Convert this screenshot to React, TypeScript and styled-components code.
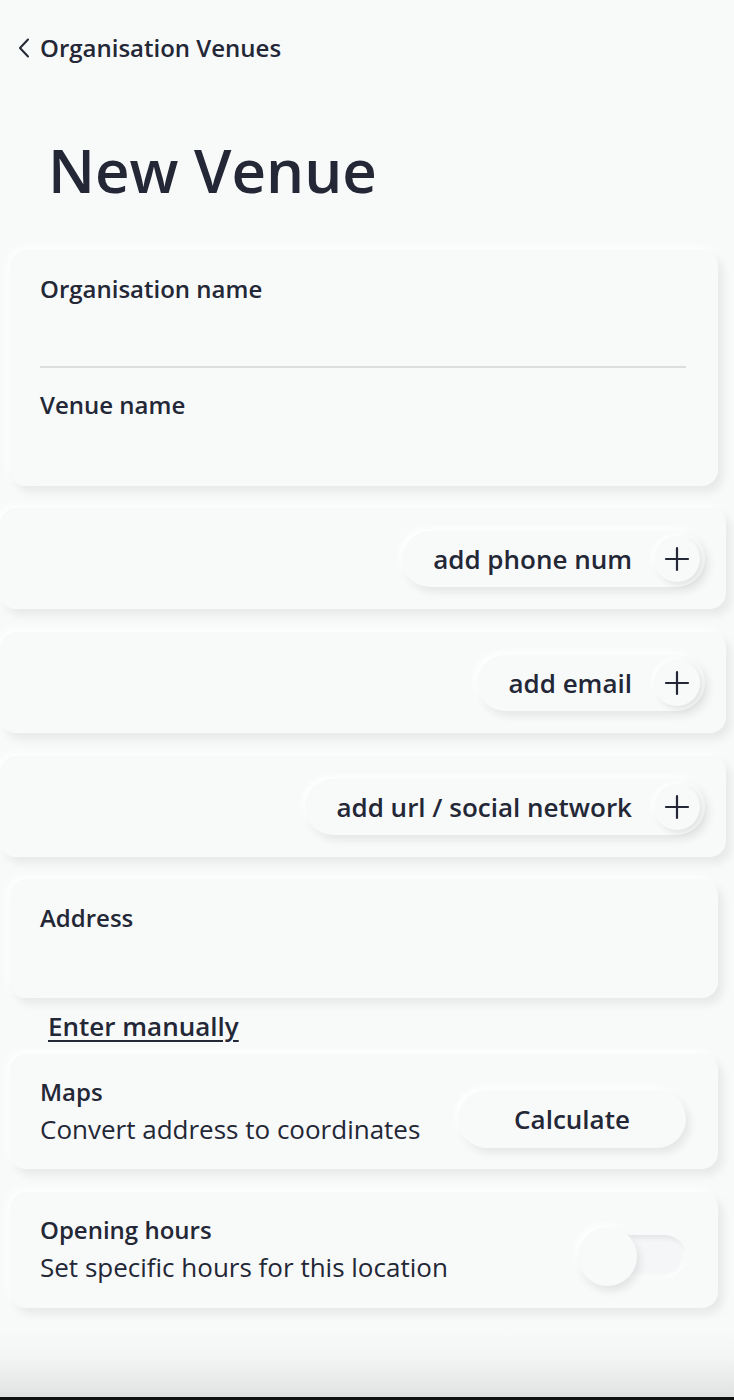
import React from "react";
import styled, { createGlobalStyle } from "styled-components";

const GlobalStyle = createGlobalStyle`
  html, body {
    margin: 0;
    padding: 0;
    background: #f8f9f9;
  }
  body {
    font-family: "Open Sans", "Noto Sans", sans-serif;
    color: #232736;
  }
  * { box-sizing: border-box; }
`;

const Page = styled.div`
  width: 734px;
  min-height: 1400px;
  display: flex;
  flex-direction: column;
  background: #f8f9f9;
  border-top-right-radius: 10px;
  overflow: hidden;
`;

const BackLink = styled.a`
  display: flex;
  align-items: center;
  gap: 9px;
  margin: 32px 0 0 17px;
  font-size: 24px;
  font-weight: 600;
  line-height: 32px;
  color: #232736;
  text-decoration: none;
  align-self: flex-start;
`;

const Title = styled.h1`
  margin: 66px 0 0 48px;
  font-size: 60px;
  font-weight: 600;
  line-height: 80px;
  color: #232736;
`;

const Stack = styled.div`
  display: flex;
  flex-direction: column;
  margin-top: 40px;
`;

const Card = styled.div<{ $wide?: boolean; $gap?: number }>`
  width: ${(p) => (p.$wide ? "726px" : "708px")};
  margin-left: ${(p) => (p.$wide ? "0" : "10px")};
  margin-top: ${(p) => p.$gap ?? 0}px;
  background: #f8f9f9;
  border-radius: 16px;
  box-shadow: 5px 6px 10px rgba(0, 0, 0, 0.07), -3px -3px 8px rgba(255, 255, 255, 0.95);
`;

const FieldCard = styled(Card)`
  padding: 23px 32px 2px 30px;
`;

const Field = styled.div`
  display: flex;
  flex-direction: column;
  & + & { margin-top: 21px; }
`;

const Label = styled.label`
  font-size: 24px;
  font-weight: 600;
  line-height: 32px;
  color: #232736;
`;

const InputLine = styled.div<{ $divider?: boolean; $h?: number }>`
  height: ${(p) => p.$h ?? 63}px;
  border-bottom: ${(p) => (p.$divider ? "2px solid #dcdddd" : "none")};
`;

const ActionCard = styled(Card)`
  height: 101px;
  display: flex;
  align-items: center;
  justify-content: flex-end;
  padding-right: 21px;
`;

const PillButton = styled.button`
  display: flex;
  align-items: center;
  gap: 22px;
  height: 56px;
  padding: 0 5px 0 31px;
  border: none;
  border-radius: 28px;
  background: #f8f9f9;
  font-family: inherit;
  font-size: 26px;
  font-weight: 600;
  color: #232736;
  box-shadow: 4px 5px 9px rgba(0, 0, 0, 0.08), -3px -3px 7px rgba(255, 255, 255, 1);
`;

const PlusCircle = styled.span`
  width: 46px;
  height: 46px;
  border-radius: 50%;
  display: flex;
  align-items: center;
  justify-content: center;
  background: #f8f9f9;
  box-shadow: 3px 3px 6px rgba(0, 0, 0, 0.09), -2px -2px 4px rgba(255, 255, 255, 1);
`;

const ManualLink = styled.a`
  margin: 12px 0 12px 48px;
  font-size: 26px;
  font-weight: 600;
  line-height: 32px;
  color: #232736;
  text-decoration: underline;
  text-decoration-thickness: 2px;
  text-underline-offset: 4px;
  align-self: flex-start;
`;

const SettingCard = styled(Card)<{ $h: number }>`
  height: ${(p) => p.$h}px;
  display: flex;
  align-items: flex-start;
  justify-content: space-between;
  padding: 22px 32px 0 30px;
`;

const SettingText = styled.div`
  display: flex;
  flex-direction: column;
  color: #232736;
`;

const SettingTitle = styled.span`
  font-size: 24px;
  line-height: 32px;
  font-weight: 600;
`;

const SettingDesc = styled.span`
  margin-top: 4px;
  font-size: 26px;
  line-height: 34px;
  font-weight: 400;
`;

const CalcButton = styled.button`
  width: 228px;
  height: 58px;
  margin-top: 14px;
  border: none;
  border-radius: 29px;
  background: #f8f9f9;
  font-family: inherit;
  font-size: 26px;
  font-weight: 600;
  color: #232736;
  box-shadow: 4px 5px 9px rgba(0, 0, 0, 0.08), -3px -3px 7px rgba(255, 255, 255, 1);
`;

const Toggle = styled.div`
  position: relative;
  width: 108px;
  height: 59px;
  margin-top: 13px;
  display: flex;
  justify-content: flex-end;
  align-items: center;
`;

const Track = styled.div`
  width: 100px;
  height: 43px;
  border-radius: 22px;
  background: #f5f6f7;
  box-shadow: inset 2px 3px 5px rgba(0, 0, 0, 0.08), inset -2px -2px 4px rgba(255, 255, 255, 0.9);
`;

const Knob = styled.div`
  position: absolute;
  left: 0;
  top: 0;
  width: 59px;
  height: 59px;
  border-radius: 50%;
  background: #f8f9f9;
  box-shadow: 3px 5px 8px rgba(0, 0, 0, 0.09), -3px -3px 6px rgba(255, 255, 255, 1);
`;

const Footer = styled.div`
  flex: 1;
  background: linear-gradient(to bottom, #f8f9f9 0%, #f4f5f5 40%, #e6e7e7 85%, #dfe0e0 100%);
`;

const BottomBar = styled.div`
  height: 3px;
  background: #111;
`;

const Spacer = styled.div`
  height: 20px;
`;

const ChevronLeft = () => (
  <svg width="14" height="20" viewBox="0 0 14 20" fill="none">
    <polyline points="11,1.5 3,10 11,18.5" stroke="#232736" strokeWidth="2" strokeLinecap="round" strokeLinejoin="round" />
  </svg>
);

const PlusIcon = () => (
  <svg width="26" height="26" viewBox="0 0 26 26" fill="none">
    <path d="M13 2v22M2 13h22" stroke="#232736" strokeWidth="2.2" strokeLinecap="round" />
  </svg>
);

const actions = [
  { label: "add phone num", gap: 22 },
  { label: "add email", gap: 23 },
  { label: "add url / social network", gap: 23 },
];

export default function App() {
  return (
    <>
      <GlobalStyle />
      <Page>
        <BackLink href="#">
          <ChevronLeft />
          Organisation Venues
        </BackLink>
        <Title>New Venue</Title>
        <Stack>
          <FieldCard>
            <Field>
              <Label>Organisation name</Label>
              <InputLine $divider />
            </Field>
            <Field>
              <Label>Venue name</Label>
              <InputLine />
            </Field>
          </FieldCard>
          {actions.map((a) => (
            <ActionCard key={a.label} $wide $gap={a.gap}>
              <PillButton>
                {a.label}
                <PlusCircle>
                  <PlusIcon />
                </PlusCircle>
              </PillButton>
            </ActionCard>
          ))}
          <FieldCard $gap={22}>
            <Field>
              <Label>Address</Label>
              <InputLine $h={62} />
            </Field>
          </FieldCard>
          <ManualLink href="#">Enter manually</ManualLink>
          <SettingCard $h={115}>
            <SettingText>
              <SettingTitle>Maps</SettingTitle>
              <SettingDesc>Convert address to coordinates</SettingDesc>
            </SettingText>
            <CalcButton>Calculate</CalcButton>
          </SettingCard>
          <SettingCard $h={116} $gap={23}>
            <SettingText>
              <SettingTitle>Opening hours</SettingTitle>
              <SettingDesc>Set specific hours for this location</SettingDesc>
            </SettingText>
            <Toggle>
              <Track />
              <Knob />
            </Toggle>
          </SettingCard>
        </Stack>
        <Spacer />
        <Footer />
        <BottomBar />
      </Page>
    </>
  );
}
